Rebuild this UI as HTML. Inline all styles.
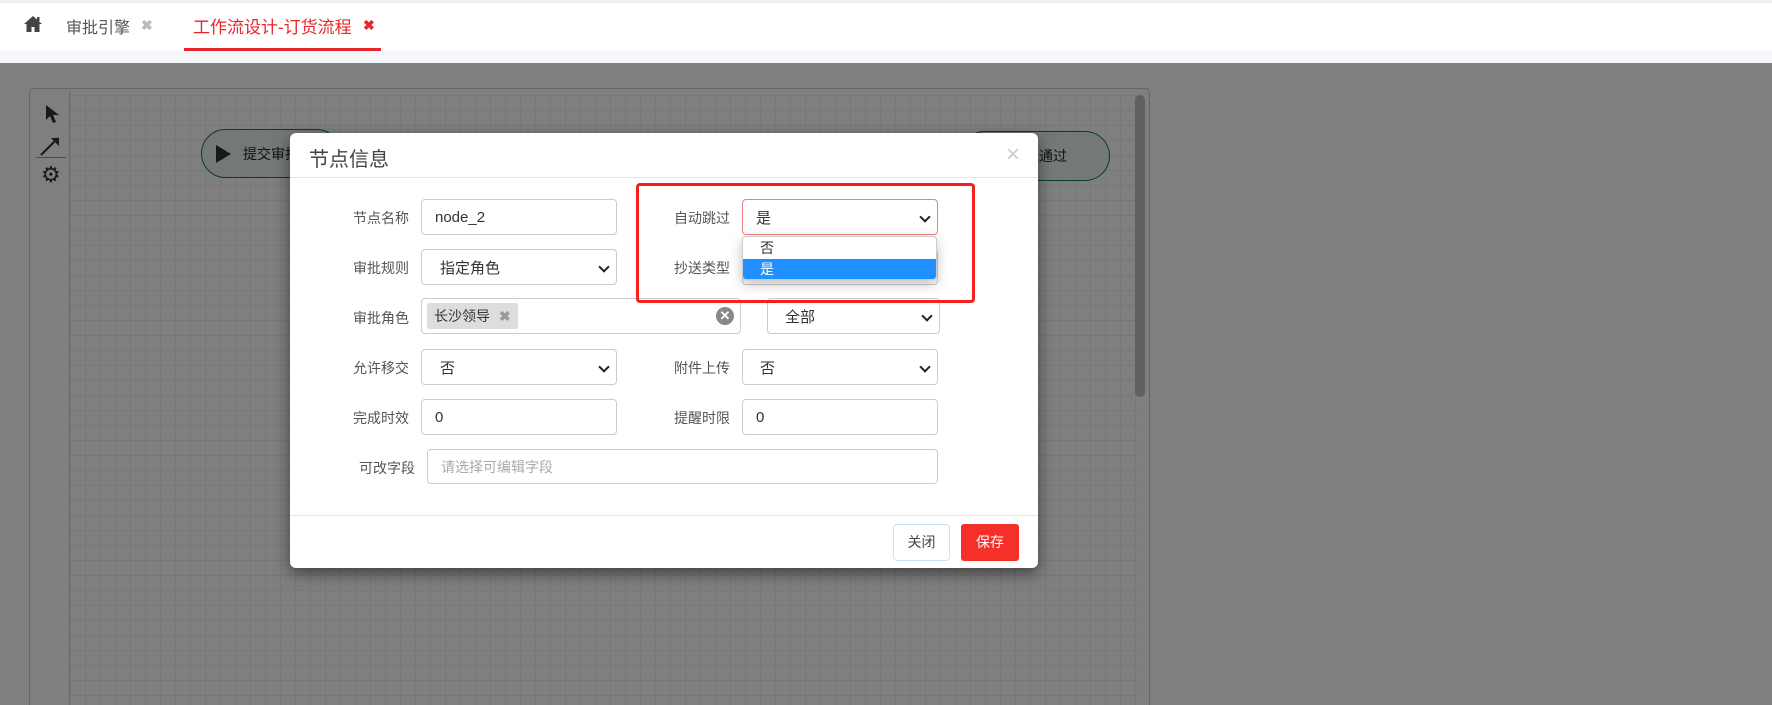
<!DOCTYPE html>
<html style="overflow:hidden"><head><meta charset="utf-8"><style>
*{box-sizing:border-box;margin:0;padding:0}
html,body{width:1772px;height:705px;overflow:hidden}
body{background:#fff;font-family:"Liberation Sans","Noto Sans CJK SC",sans-serif;font-size:14px;color:#333;position:relative}
.a{position:absolute}
.band{left:0;top:51px;width:1772px;height:12px;background:#f5f6f9}
.panel{left:29px;top:88px;width:1121px;height:617px;border:1px solid #ccc;border-bottom:none;border-radius:4px 4px 0 0;background:#fff}
.grid{left:70px;top:95px;width:1069px;height:610px;background-image:linear-gradient(#efefef 1px,transparent 1px),linear-gradient(90deg,#efefef 1px,transparent 1px);background-size:15px 15px}
.sep{left:69px;top:92px;width:1px;height:613px;background:#ccc}
.node{border:1.5px solid #0f7a4a;border-radius:28px;background:#e8f3ee;font-size:14px;color:#222;display:flex;align-items:center;white-space:nowrap}
.ov{left:0;top:63px;width:1772px;height:642px;background:rgba(0,0,0,.5)}
.modal{left:290px;top:133px;width:748px;height:435px;background:#fff;border-radius:6px;box-shadow:0 5px 15px rgba(0,0,0,.5)}
.lbl{font-size:14px;color:#555;text-align:right;width:70px}
.in{border:1px solid #ccc;border-radius:4px;background:#fff;height:36px;font-size:15px;color:#333;padding-left:13px;display:flex;align-items:center}
.chev{position:absolute;right:8px;top:13px;width:8px;height:8px;border-right:2px solid #222;border-bottom:2px solid #222;transform:rotate(45deg)}
</style></head><body>
<div class="a" style="left:0;top:0;width:1772px;height:3px;background:#eee"></div>
<svg class="a" style="left:23px;top:15px" width="20" height="17" viewBox="0 0 20 17"><path d="M10 1L1 9h2.5v8h5v-5h3v5h5V9H19z" fill="#444"/><rect x="14" y="2" width="2.5" height="4" fill="#444"/></svg>
<div class="a" style="left:66px;top:14px;font-size:16px;color:#555">审批引擎</div>
<div class="a" style="left:141px;top:17px;font-size:14px;color:#bbb;font-weight:bold">✖</div>
<div class="a" style="left:193px;top:13px;font-size:17px;color:#e8262a">工作流设计-订货流程</div>
<div class="a" style="left:363px;top:17px;font-size:14px;color:#e8262a;font-weight:bold">✖</div>
<div class="a" style="left:184px;top:48px;width:197px;height:3px;background:#e8262a"></div>
<div class="a band"></div>
<div class="a panel"></div>
<div class="a grid"></div>
<div class="a sep"></div>
<div class="a" style="left:1135px;top:95px;width:10px;height:302px;background:#c1c1c1;border-radius:5px"></div>
<svg class="a" style="left:44px;top:104px" width="16" height="20" viewBox="0 0 16 20"><path d="M2 1v15l4-4 3 7 3-1-3-7h6z" fill="#333"/></svg>
<svg class="a" style="left:39px;top:135px" width="22" height="22" viewBox="0 0 22 22"><path d="M2 20L19 3" stroke="#333" stroke-width="2"/><path d="M12 3h8v8z" fill="#333"/></svg>
<div class="a" style="left:36px;top:157px;width:30px;height:1px;background:#999"></div>
<div class="a" style="left:41px;top:162px;font-size:22px;color:#333">⚙</div>
<div class="a node" style="left:201px;top:129px;width:140px;height:49px;padding-left:14px"><span style="display:inline-block;width:0;height:0;border-left:15px solid #333;border-top:9px solid transparent;border-bottom:9px solid transparent;margin-right:12px"></span>提交审批</div>
<div class="a node" style="left:960px;top:131px;width:150px;height:50px;padding-left:50px">审批通过</div>
<div class="a ov"></div>
<div class="a modal">
 <div class="a" style="left:19px;top:10px;font-size:20px;color:#444">节点信息</div>
 <div class="a" style="left:716px;top:8px;font-size:24px;color:#ccc">×</div>
 <div class="a" style="left:0;top:44px;width:748px;height:1px;background:#e5e5e5"></div>

 <div class="a lbl" style="left:49px;top:75px">节点名称</div>
 <div class="a in" style="left:131px;top:66px;width:196px">node_2</div>
 <div class="a lbl" style="left:370px;top:75px">自动跳过</div>
 <div class="a in" style="left:452px;top:66px;width:196px;border-color:#f08080">是<span class="chev"></span></div>

 <div class="a lbl" style="left:49px;top:125px">审批规则</div>
 <div class="a in" style="left:131px;top:116px;width:196px;padding-left:18px">指定角色<span class="chev"></span></div>
 <div class="a lbl" style="left:370px;top:125px">抄送类型</div>
 <div class="a in" style="left:452px;top:116px;width:196px"></div>

 <div class="a lbl" style="left:49px;top:175px">审批角色</div>
 <div class="a in" style="left:131px;top:165px;width:320px;padding-left:5px"><span style="background:#ddd;border-radius:2px;padding:3px 7px;font-size:14px">长沙领导 <b style="color:#999;margin-left:5px">✖</b></span><span style="position:absolute;right:6px;top:8px;width:18px;height:18px;border-radius:50%;background:#888;color:#fff;font-size:13px;line-height:18px;text-align:center;font-weight:bold">✕</span></div>
 <div class="a in" style="left:477px;top:165px;width:173px;padding-left:17px">全部<span class="chev"></span></div>

 <div class="a lbl" style="left:49px;top:225px">允许移交</div>
 <div class="a in" style="left:131px;top:216px;width:196px;padding-left:18px">否<span class="chev"></span></div>
 <div class="a lbl" style="left:370px;top:225px">附件上传</div>
 <div class="a in" style="left:452px;top:216px;width:196px;padding-left:17px">否<span class="chev"></span></div>

 <div class="a lbl" style="left:49px;top:275px">完成时效</div>
 <div class="a in" style="left:131px;top:266px;width:196px">0</div>
 <div class="a lbl" style="left:370px;top:275px">提醒时限</div>
 <div class="a in" style="left:452px;top:266px;width:196px">0</div>

 <div class="a lbl" style="left:55px;top:325px">可改字段</div>
 <div class="a in" style="left:137px;top:316px;width:511px;color:#aaa;font-size:14px;height:35px">请选择可编辑字段</div>

 <div class="a" style="left:0;top:382px;width:748px;height:1px;background:#e5e5e5"></div>
 <div class="a" style="left:603px;top:391px;width:57px;height:37px;border:1px solid #cfe0ee;border-radius:4px;text-align:center;line-height:35px;font-size:14px;color:#444">关闭</div>
 <div class="a" style="left:671px;top:391px;width:58px;height:37px;background:#f5302a;border-radius:3px;text-align:center;line-height:37px;font-size:14px;color:#fff">保存</div>

 <div class="a" style="left:452px;top:103px;width:195px;height:44px;background:#fff;border:1px solid #ccc;border-radius:4px;box-shadow:0 4px 12px rgba(0,0,0,.25);overflow:hidden">
  <div style="height:22px;padding-left:17px;font-size:14px;line-height:22px">否</div>
  <div style="height:20px;padding-left:17px;font-size:14px;line-height:20px;background:#1e90ff;color:#fff">是</div>
 </div>
 <div class="a" style="left:346px;top:50px;width:339px;height:120px;border:3px solid #f5201c;border-radius:4px"></div>
</div>
</body></html>
